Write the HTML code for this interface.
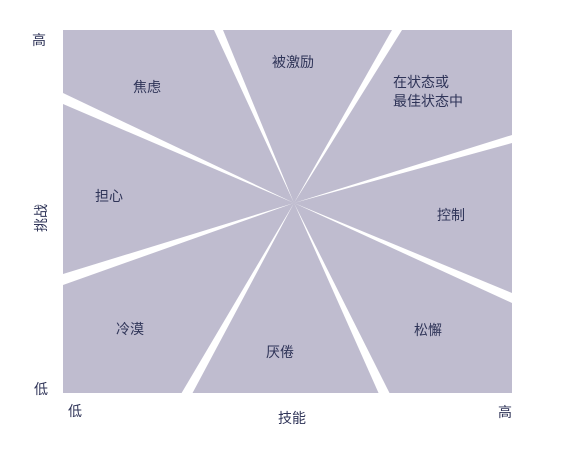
<!DOCTYPE html>
<html><head><meta charset="utf-8"><style>
body{margin:0;width:577px;height:456px;background:#fff;overflow:hidden}
svg text{font-family:"Liberation Sans","Noto Sans CJK SC",sans-serif;font-size:14px;fill:#2f3458}
</style></head><body>
<svg width="577" height="456" viewBox="0 0 577 456">
<rect x="63" y="30" width="449" height="363" fill="#bfbccf"/>
<g fill="#fff">
<polygon points="294,203 214,30 223,30"/>
<polygon points="294,203 392,30 402,30"/>
<polygon points="294,203 63,93 63,104"/>
<polygon points="294,203 63,274 63,285"/>
<polygon points="294,203 512,135 512,143"/>
<polygon points="294,203 512,293 512,303"/>
<polygon points="294,203 181,394 192,394"/>
<polygon points="294,203 379,394 390,394"/>
</g>
<text x="133" y="92">焦虑</text>
<text x="272" y="67">被激励</text>
<text x="393" y="87">在状态或</text>
<text x="393" y="106">最佳状态中</text>
<text x="95" y="201">担心</text>
<text x="437" y="220">控制</text>
<text x="116" y="334">冷漠</text>
<text x="266" y="357">厌倦</text>
<text x="414" y="335">松懈</text>
<text x="32" y="45">高</text>
<text x="34" y="394">低</text>
<text x="68" y="416">低</text>
<text x="498" y="417">高</text>
<text x="278" y="423">技能</text>
<text transform="translate(46,232) rotate(-90)">挑战</text>
</svg>
</body></html>
